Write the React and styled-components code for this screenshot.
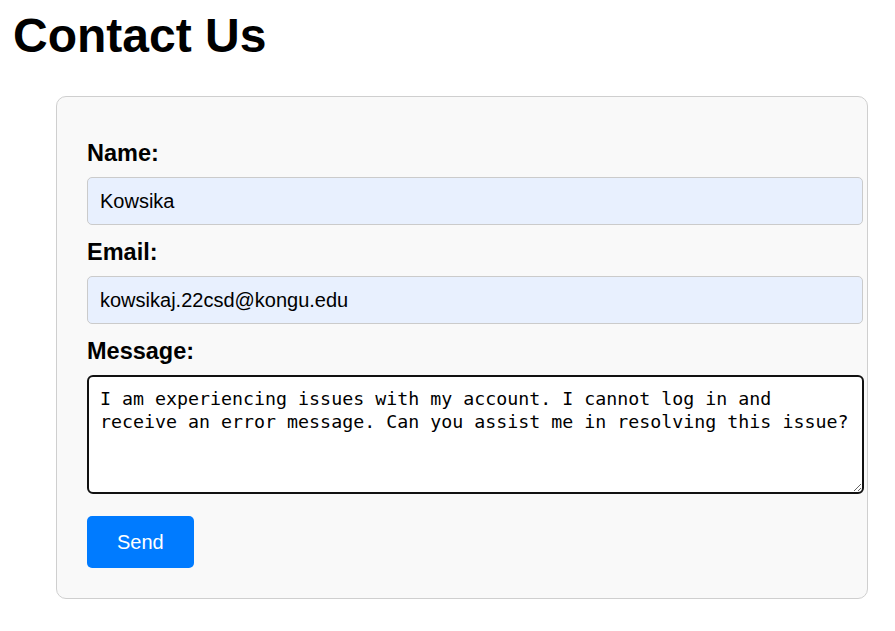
import React from "react";
import styled, { createGlobalStyle } from "styled-components";

const Global = createGlobalStyle`
  html, body { margin: 0; padding: 0; background: #fff; }
  body { padding: 9px 8px 8px 8px; font-family: "Liberation Sans", Arial, sans-serif; color: #000; }
`;

const Title = styled.h1`
  margin: 0 0 33px 5px;
  font-family: "Liberation Sans", Arial, sans-serif;
  font-size: 48px;
  font-weight: 700;
  line-height: 54px;
`;

const Card = styled.div`
  margin-left: 48px;
  width: 750px;
  padding: 43px 30px 30px 30px;
  background: #f9f9f9;
  border: 1px solid #cfcfcf;
  border-radius: 10px;
`;

const Form = styled.form`
  display: flex;
  flex-direction: column;
`;

const Field = styled.div`
  display: flex;
  flex-direction: column;
  margin-bottom: ${(p) => p.$gap}px;
`;

const Label = styled.label`
  display: block;
  font-size: 23.5px;
  font-weight: 700;
  line-height: 27px;
  margin-bottom: 10px;
`;

const Input = styled.input`
  display: block;
  width: 750px;
  box-sizing: content-box;
  padding: 12px;
  height: 22px;
  font-family: "Liberation Sans", Arial, sans-serif;
  font-size: 20px;
  color: #000;
  background: #e8f0fe;
  border: 1px solid #cbcbcb;
  border-radius: 5px;
  outline: none;
`;

const TextArea = styled.textarea`
  display: block;
  width: 752px;
  box-sizing: content-box;
  height: 95px;
  padding: 10px 10px 10px 11px;
  font-family: "DejaVu Sans Mono", "Liberation Mono", monospace;
  font-size: 18.3px;
  line-height: 23px;
  color: #000;
  background: #fff;
  border: 2px solid #111;
  border-radius: 6px;
  outline: none;
`;

const Button = styled.button`
  align-self: flex-start;
  height: 52px;
  padding: 0 30px;
  font-family: "Liberation Sans", Arial, sans-serif;
  font-size: 20px;
  color: #fff;
  background: #007bff;
  border: none;
  border-radius: 5px;
  cursor: pointer;
`;

export default function App() {
  return (
    <>
      <Global />
      <Title>Contact Us</Title>
      <Card>
        <Form onSubmit={(e) => e.preventDefault()}>
          <Field $gap={14}>
            <Label htmlFor="name">Name:</Label>
            <Input id="name" type="text" defaultValue="Kowsika" />
          </Field>
          <Field $gap={14}>
            <Label htmlFor="email">Email:</Label>
            <Input id="email" type="email" defaultValue="kowsikaj.22csd@kongu.edu" />
          </Field>
          <Field $gap={22}>
            <Label htmlFor="message">Message:</Label>
            <TextArea
              id="message"
              defaultValue="I am experiencing issues with my account. I cannot log in and receive an error message. Can you assist me in resolving this issue?"
            />
          </Field>
          <Button type="submit">Send</Button>
        </Form>
      </Card>
    </>
  );
}
